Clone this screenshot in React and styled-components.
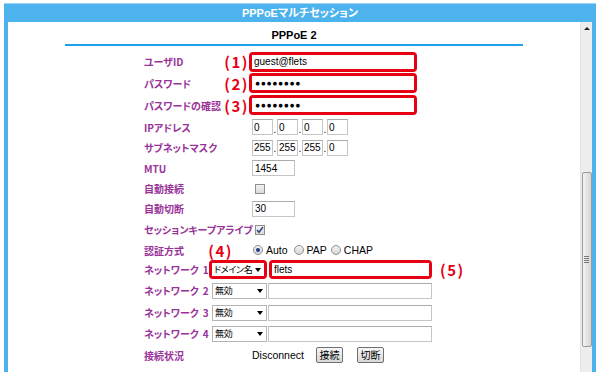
import React from "react";
import styled, { createGlobalStyle } from "styled-components";

const GlobalStyle = createGlobalStyle`
  html, body { margin: 0; padding: 0; background: #fff; overflow: hidden; }
  body { font-family: "Liberation Sans", "Noto Sans CJK JP", sans-serif; }
  * { box-sizing: border-box; }
`;

const Frame = styled.div`
  margin: 3px 0 0 4px;
  width: 592px;
  height: 380px;
  background: #4db3ee;
  border-top: 1px solid #9fd6f6;
  display: flex;
  flex-direction: column;
`;

const TitleBar = styled.div`
  height: 18px;
  text-align: center;
  color: #fff;
  font: 700 11px "Liberation Sans", "Noto Sans CJK JP", sans-serif;
  line-height: 18px;
  font-feature-settings: "palt";
`;

const Body = styled.div`
  flex: 1;
  display: flex;
  margin: 0 4px;
  background: #fff;
`;

const Content = styled.div`
  flex: 1;
  display: flex;
  flex-direction: column;
`;

const Heading = styled.div`
  height: 22px;
  text-align: center;
  font: 700 11px "Liberation Sans", sans-serif;
  line-height: 27px;
  color: #000;
`;

const Rule = styled.div`
  height: 2px;
  background: #1ea1e6;
  margin: 0 57px 5px;
`;

const Form = styled.div`
  display: flex;
  flex-direction: column;
  padding-left: 136px;
`;

const Row = styled.div`
  display: flex;
  align-items: center;
  height: ${(p) => p.$h}px;
`;

const Label = styled.div`
  width: ${(p) => p.$w || 108}px;
  flex: none;
  display: flex;
  align-items: center;
  justify-content: space-between;
  color: #993399;
  font: 700 10px "Noto Sans CJK JP", sans-serif;
  font-feature-settings: "palt";
  white-space: nowrap;
`;

const Num = styled.span`
  margin-left: 4px;
  margin-right: auto;
`;

const Mark = styled.span`
  color: #e60012;
  font: 700 15px "Noto Sans CJK JP", sans-serif;
  letter-spacing: 1.5px;
  line-height: 1;
  margin-right: ${(p) => p.$mr ?? 3}px;
  margin-left: ${(p) => p.$ml || 0}px;
`;

const Highlight = styled.div`
  display: flex;
  border: 3px solid #e60012;
  border-radius: 4px;
  margin-left: ${(p) => p.$ml || 0}px;
  background: #fff;
`;

const Input = styled.input`
  width: ${(p) => p.$w}px;
  height: ${(p) => p.$h || 16}px;
  margin: 0;
  margin-left: ${(p) => p.$ml || 0}px;
  padding: 0 ${(p) => p.$pad ?? 2}px;
  border: ${(p) => (p.$bare ? "none" : "1px solid #c6c6c6")};
  border-top-color: ${(p) => (p.$bare ? "transparent" : "#ababab")};
  background: #fff;
  color: #000;
  font: ${(p) => (p.$dots ? "700 8.5px" : "10px")} "Liberation Sans", sans-serif;
  letter-spacing: ${(p) => (p.$dots ? "0.6px" : "0")};
  outline: none;
`;

const Dot = styled.span`
  width: 4px;
  align-self: flex-end;
  padding-bottom: 4px;
  font: 10px "Liberation Sans", sans-serif;
  line-height: 8px;
  text-align: center;
`;

const Select = styled.div`
  width: ${(p) => p.$w}px;
  height: ${(p) => p.$h || 16}px;
  display: flex;
  align-items: center;
  justify-content: space-between;
  padding: 0 3px 0 2px;
  border: ${(p) => (p.$bare ? "none" : "1px solid #b4b4b4")};
  background: #fff;
  font: 9px "Noto Sans CJK JP", sans-serif;
  letter-spacing: -0.3px;
  font-feature-settings: "palt";
  color: #000;
  white-space: nowrap;
`;

const Arrow = styled.span`
  width: 0;
  height: 0;
  flex: none;
  border-left: 3px solid transparent;
  border-right: 3px solid transparent;
  border-top: 4px solid #000;
`;

const Check = styled.span`
  width: 10px;
  height: 10px;
  margin-left: 3px;
  border: 1px solid #8e8e8e;
  background: linear-gradient(#f2f2f2, #d9d9d9);
  display: flex;
  align-items: center;
  justify-content: center;
`;

const Radios = styled.div`
  display: flex;
  align-items: center;
  margin-left: 1px;
  font: 10.5px "Liberation Sans", sans-serif;
  color: #000;
`;

const Radio = styled.span`
  width: 10px;
  height: 10px;
  border-radius: 50%;
  border: 1px solid #8e8e8e;
  background: linear-gradient(#f4f4f4, #d6d6d6);
  display: flex;
  align-items: center;
  justify-content: center;
  margin: 0 3px 0 ${(p) => p.$ml || 0}px;
  &::after {
    content: "";
    width: 4px;
    height: 4px;
    border-radius: 50%;
    background: ${(p) => (p.$on ? "#1d3e86" : "transparent")};
  }
`;

const Status = styled.span`
  font: 10.5px "Liberation Sans", sans-serif;
  color: #000;
  margin-right: 12px;
`;

const Button = styled.button`
  height: 16px;
  width: 27px;
  padding: 0;
  margin: 0 14px 0 0;
  border: 1px solid #6f6f6f;
  border-radius: 2px;
  background: linear-gradient(#f7f7f7, #d8d8d8);
  font: 10px "Noto Sans CJK JP", sans-serif;
  color: #000;
  line-height: 14px;
`;

const ScrollBar = styled.div`
  width: 12px;
  flex: none;
  background: #ededed;
  border-left: 1px solid #e3e3e3;
  display: flex;
  flex-direction: column;
  align-items: center;
`;

const ScrollUp = styled.div`
  height: 12px;
  display: flex;
  align-items: center;
  justify-content: center;
  &::after {
    content: "";
    border-left: 3px solid transparent;
    border-right: 3px solid transparent;
    border-bottom: 3px solid #222;
  }
`;

const Thumb = styled.div`
  margin-top: 138px;
  width: 10px;
  height: 175px;
  border: 1px solid #9b9b9b;
  border-radius: 2px;
  background: linear-gradient(to right, #f4f4f4, #d4d4d4);
  display: flex;
  align-items: center;
  justify-content: center;
`;

const Grip = styled.div`
  width: 5px;
  height: 7px;
  background: repeating-linear-gradient(#777 0 1px, transparent 1px 2px);
`;

const CheckMark = () => (
  <svg width="8" height="8" viewBox="0 0 8 8">
    <path d="M1 4 L3 6.3 L7 1" fill="none" stroke="#2b4a86" strokeWidth="1.5" />
  </svg>
);

const ipFields = (vals) =>
  vals.map((v, i) => (
    <React.Fragment key={i}>
      {i > 0 && <Dot>.</Dot>}
      <Input $w={21} $pad={1} readOnly value={v} />
    </React.Fragment>
  ));

const NetLabel = ({ n, w }) => (
  <Label $w={w}>
    ネットワーク<Num>{n}</Num>
  </Label>
);

export default function App() {
  return (
    <>
      <GlobalStyle />
      <Frame>
        <TitleBar>PPPoEマルチセッション</TitleBar>
        <Body>
          <Content>
            <Heading>PPPoE 2</Heading>
            <Rule />
            <Form>
              <Row $h={21}>
                <Label>ユーザID<Mark>(1)</Mark></Label>
                <Highlight $ml={-3}>
                  <Input $bare $w={162} $h={14} readOnly value="guest@flets" />
                </Highlight>
              </Row>
              <Row $h={22}>
                <Label>パスワード<Mark>(2)</Mark></Label>
                <Highlight $ml={-3}>
                  <Input $bare $dots $pad={3} $w={162} $h={14} readOnly value="●●●●●●●●" />
                </Highlight>
              </Row>
              <Row $h={22}>
                <Label>パスワードの確認<Mark>(3)</Mark></Label>
                <Highlight $ml={-3}>
                  <Input $bare $dots $pad={3} $w={162} $h={14} readOnly value="●●●●●●●●" />
                </Highlight>
              </Row>
              <Row $h={22}>
                <Label>IPアドレス</Label>
                {ipFields(["0", "0", "0", "0"])}
              </Row>
              <Row $h={19}>
                <Label>サブネットマスク</Label>
                {ipFields(["255", "255", "255", "0"])}
              </Row>
              <Row $h={22}>
                <Label>MTU</Label>
                <Input $w={43} readOnly value="1454" />
              </Row>
              <Row $h={19}>
                <Label>自動接続</Label>
                <Check />
              </Row>
              <Row $h={21}>
                <Label>自動切断</Label>
                <Input $w={43} readOnly value="30" />
              </Row>
              <Row $h={21}>
                <Label>セッションキープアライブ</Label>
                <Check><CheckMark /></Check>
              </Row>
              <Row $h={20}>
                <Label>認証方式<Mark $mr={19}>(4)</Mark></Label>
                <Radios>
                  <Radio $on />Auto
                  <Radio $ml={6} />PAP
                  <Radio $ml={4} />CHAP
                </Radios>
              </Row>
              <Row $h={19}>
                <NetLabel n="1" w={65} />
                <Highlight>
                  <Select $bare $w={52} $h={13}>ドメイン名<Arrow /></Select>
                </Highlight>
                <Highlight $ml={2}>
                  <Input $bare $w={157} $h={13} readOnly value="flets" />
                </Highlight>
                <Mark $mr={0} $ml={8}>(5)</Mark>
              </Row>
              <Row $h={23}>
                <NetLabel n="2" w={68} />
                <Select $w={55}>無効<Arrow /></Select>
                <Input $ml={1} $w={164} readOnly value="" />
              </Row>
              <Row $h={21}>
                <NetLabel n="3" w={68} />
                <Select $w={55}>無効<Arrow /></Select>
                <Input $ml={1} $w={164} readOnly value="" />
              </Row>
              <Row $h={21}>
                <NetLabel n="4" w={68} />
                <Select $w={55}>無効<Arrow /></Select>
                <Input $ml={1} $w={164} readOnly value="" />
              </Row>
              <Row $h={22}>
                <Label>接続状況</Label>
                <Status>Disconnect</Status>
                <Button>接続</Button>
                <Button>切断</Button>
              </Row>
            </Form>
          </Content>
          <ScrollBar>
            <ScrollUp />
            <Thumb><Grip /></Thumb>
          </ScrollBar>
        </Body>
      </Frame>
    </>
  );
}
